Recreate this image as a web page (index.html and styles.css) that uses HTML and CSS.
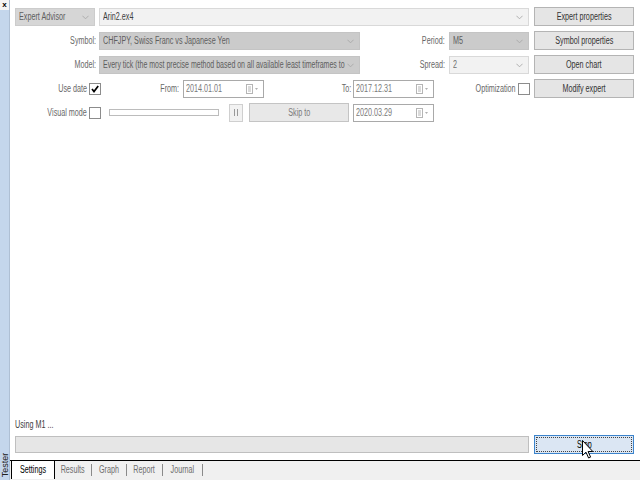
FILE: index.html
```html
<!DOCTYPE html>
<html>
<head>
<meta charset="utf-8">
<title>Tester</title>
<link rel="stylesheet" href="styles.css">
</head>
<body>
<div class="app">
  <div class="side">
    <div class="close">x</div>
    <div class="side-fill"></div>
    <div class="side-label"><span>Tester</span></div>
  </div>
  <div class="main">
    <div class="form">
      <div class="row">
        <div class="combo dark w-ea"><div class="val"><span class="t">Expert Advisor</span></div><svg class="chev" viewBox="0 0 8 5"><polyline points="0.5,0.5 4,4 7.5,0.5"/></svg></div>
        <div class="combo light w-file g4"><div class="val"><span class="t ink">Arin2.ex4</span></div><svg class="chev" viewBox="0 0 8 5"><polyline points="0.5,0.5 4,4 7.5,0.5"/></svg></div>
        <button class="btn g5"><span class="t c">Expert properties</span></button>
      </div>
      <div class="row">
        <div class="lbl w-l1"><span class="t r">Symbol:</span></div>
        <div class="combo darker w-sym"><div class="val"><span class="t">CHFJPY, Swiss Franc vs Japanese Yen</span></div><svg class="chev" viewBox="0 0 8 5"><polyline points="0.5,0.5 4,4 7.5,0.5"/></svg></div>
        <div class="lbl w-l2"><span class="t r">Period:</span></div>
        <div class="combo darker w-per"><div class="val"><span class="t">M5</span></div><svg class="chev" viewBox="0 0 8 5"><polyline points="0.5,0.5 4,4 7.5,0.5"/></svg></div>
        <button class="btn g5"><span class="t c">Symbol properties</span></button>
      </div>
      <div class="row">
        <div class="lbl w-l1"><span class="t r">Model:</span></div>
        <div class="combo darker w-sym"><div class="val"><span class="t narrow">Every tick (the most precise method based on all available least timeframes to</span></div><svg class="chev" viewBox="0 0 8 5"><polyline points="0.5,0.5 4,4 7.5,0.5"/></svg></div>
        <div class="lbl w-l2"><span class="t r">Spread:</span></div>
        <div class="combo light w-per"><div class="val"><span class="t">2</span></div><svg class="chev" viewBox="0 0 8 5"><polyline points="0.5,0.5 4,4 7.5,0.5"/></svg></div>
        <button class="btn g5"><span class="t c">Open chart</span></button>
      </div>
      <div class="row">
        <div class="lbl w-l3"><span class="t r">Use date</span></div>
        <div class="chk"><svg viewBox="0 0 10 10"><polyline points="2,5 4,7.5 8.2,2"/></svg></div>
        <div class="lbl w-from"><span class="t r">From:</span></div>
        <div class="date"><span class="t">2014.01.01</span><svg class="cal" viewBox="0 0 13 10"><rect x="0.5" y="0.5" width="6" height="9"/><line x1="2" y1="3" x2="5" y2="3"/><line x1="2" y1="5" x2="5" y2="5"/><line x1="2" y1="7" x2="5" y2="7"/><polygon class="tri" points="9,4 12,4 10.5,6"/></svg></div>
        <div class="lbl w-to"><span class="t r">To:</span></div>
        <div class="date"><span class="t">2017.12.31</span><svg class="cal" viewBox="0 0 13 10"><rect x="0.5" y="0.5" width="6" height="9"/><line x1="2" y1="3" x2="5" y2="3"/><line x1="2" y1="5" x2="5" y2="5"/><line x1="2" y1="7" x2="5" y2="7"/><polygon class="tri" points="9,4 12,4 10.5,6"/></svg></div>
        <div class="lbl w-opt"><span class="t r">Optimization</span></div>
        <div class="chk"></div>
        <button class="btn g4"><span class="t c">Modify expert</span></button>
      </div>
      <div class="row">
        <div class="lbl w-l3"><span class="t r">Visual mode</span></div>
        <div class="chk"></div>
        <div class="slider"></div>
        <div class="pause"><i></i><i></i></div>
        <button class="btn skip"><span class="t c">Skip to</span></button>
        <div class="date g4"><span class="t">2020.03.29</span><svg class="cal" viewBox="0 0 13 10"><rect x="0.5" y="0.5" width="6" height="9"/><line x1="2" y1="3" x2="5" y2="3"/><line x1="2" y1="5" x2="5" y2="5"/><line x1="2" y1="7" x2="5" y2="7"/><polygon class="tri" points="9,4 12,4 10.5,6"/></svg></div>
      </div>
    </div>
    <div class="spacer"></div>
    <div class="status"><span class="t ink">Using M1 ...</span></div>
    <div class="progress-row">
      <div class="progress"></div>
      <button class="btn stop"><span class="focus"><span class="t c black">Stop</span></span></button>
    </div>
    <div class="tabs">
      <div class="tab active"><span class="t c black">Settings</span></div>
      <div class="tab w-res"><span class="t c">Results</span></div>
      <div class="tab w-gra"><span class="t c">Graph</span></div>
      <div class="tab w-rep"><span class="t c">Report</span></div>
      <div class="tab w-jou"><span class="t c">Journal</span></div>
    </div>
  </div>
  <svg class="cursor" viewBox="0 0 12 19"><path d="M0.5,0.5 L0.5,15.5 L4,12.2 L6.6,18 L8.6,17.1 L6.1,11.5 L10.8,11.5 Z"/></svg>
</div>
</body>
</html>
```
FILE: styles.css
```css
* { box-sizing: border-box; }
html, body { margin: 0; padding: 0; background: #ffffff; }
body { font-family: "Liberation Sans", Arial, sans-serif; font-size: 10px; color: #686868; }

.app { position: relative; display: flex; width: 640px; height: 480px; overflow: hidden; }

/* side strip */
.side { width: 10px; display: flex; flex-direction: column; background: #c4d6ec; border-right: 1px solid #aebfd4; }
.close { height: 10px; background: #f4f4f4; color: #000; font-weight: bold; font-size: 8px; line-height: 9px; text-align: center; }
.side-fill { flex: 1; }
.side-label { height: 26px; position: relative; margin-bottom: 2px; }
.side-label span { position: absolute; left: 50%; top: 50%; transform: translate(-50%, -50%) rotate(-90deg); font-size: 9px; color: #202020; white-space: nowrap; }

/* main */
.main { flex: 1; display: flex; flex-direction: column; }
.form { padding: 7px 0 0 5px; }
.row { display: flex; align-items: center; height: 19px; margin-bottom: 5px; }

.t { display: inline-block; white-space: nowrap; transform: scaleX(0.72); transform-origin: left center; line-height: 12px; }
.t.r { transform-origin: right center; }
.t.c { transform-origin: center center; }
.t.narrow { transform: scaleX(0.7); }
.ink { color: #404040; }
.black { color: #000; }

.lbl { text-align: right; white-space: nowrap; }
.w-l1 { width: 84px; padding-right: 3px; }
.w-l2 { width: 89px; padding-right: 4px; }
.w-l3 { width: 74px; padding-right: 2px; }
.w-from { width: 82px; padding-right: 4px; }
.w-to { width: 89px; padding-right: 2px; }
.w-opt { width: 84px; padding-right: 2px; }

.g4 { margin-left: 4px; }
.g5 { margin-left: 5px; }

.combo { position: relative; height: 18px; display: flex; align-items: center; padding-left: 3px; border: 1px solid #cfcfcf; color: #5e5e5e; }
.val { flex: 1; min-width: 0; overflow: hidden; margin-right: 12px; height: 14px; display: flex; align-items: center; }
.combo.dark { background: #d6d6d6; border-color: #cccccc; }
.combo.darker { background: #cbcbcb; border-color: #c4c4c4; }
.combo.light { background: #f2f2f2; border-color: #d9d9d9; color: #707070; }
.chev { position: absolute; right: 5px; top: 6px; width: 7px; height: 5px; fill: none; stroke: #a8a8a8; stroke-width: 1; }
.w-ea { width: 80px; }
.w-file { width: 430px; }
.w-sym { width: 261px; }
.w-per { width: 80px; }

.btn { width: 100px; height: 19px; padding: 0; margin-top: 0; margin-bottom: 0; margin-right: 0; border: 1px solid #b4b4b4; background: #e5e5e5; font-family: inherit; font-size: 10px; color: #333; display: flex; align-items: center; justify-content: center; }

.chk { width: 12px; height: 12px; border: 1px solid #8c8c8c; background: #fff; flex: none; }
.chk svg { display: block; width: 10px; height: 10px; fill: none; stroke: #000; stroke-width: 1.7; }

.date { position: relative; width: 81px; height: 18px; border: 1px solid #a9a9a9; background: #fff; display: flex; align-items: center; padding-left: 2px; color: #7a7a7a; }
.cal { position: absolute; right: 4px; top: 3px; width: 13px; height: 10px; fill: none; stroke: #b5b5b5; stroke-width: 1; }
.cal .tri { fill: #b0b0b0; stroke: none; }

.slider { width: 110px; height: 7px; margin-left: 8px; border: 1px solid #bcbcbc; background: #fff; }
.pause { width: 14px; height: 18px; margin-left: 10px; border: 1px solid #cfcfcf; background: #f2f2f2; display: flex; align-items: center; justify-content: center; gap: 2px; }
.pause i { display: block; width: 1px; height: 7px; background: #9a9a9a; }
.btn.skip { margin-left: 6px; color: #7a7a7a; background: #e8e8e8; border-color: #c4c4c4; }

.spacer { flex: 1; }
.status { height: 14px; padding-left: 5px; margin-bottom: 3px; display: flex; align-items: center; }
.progress-row { display: flex; align-items: center; height: 19px; padding-left: 5px; margin-bottom: 6px; }
.progress { width: 514px; height: 17px; background: #e6e6e6; border: 1px solid #bfbfbf; }
.btn.stop { margin-left: 5px; background: #dbe6f3; border-color: #3c84cc; padding: 1px; }
.focus { display: flex; align-items: center; justify-content: center; width: 100%; height: 100%; border: 1px dotted #444; }

.tabs { height: 20px; border-top: 1px solid #000; background: #f0f0f0; display: flex; align-items: flex-start; }
.tab { height: 12px; margin-top: 3px; border-right: 1px solid #8a8a8a; display: flex; align-items: center; justify-content: center; color: #6e6e6e; }
.tab.active { height: 18px; margin-top: 0; margin-left: 1px; width: 44px; background: #fff; border-left: 1px solid #000; border-right: 1px solid #000; }
.w-res { width: 37px; }
.w-gra { width: 35px; }
.w-rep { width: 36px; }
.w-jou { width: 40px; }

.cursor { position: absolute; left: 582px; top: 440px; width: 12px; height: 19px; }
.cursor path { fill: #fff; stroke: #000; stroke-width: 1; }
```
